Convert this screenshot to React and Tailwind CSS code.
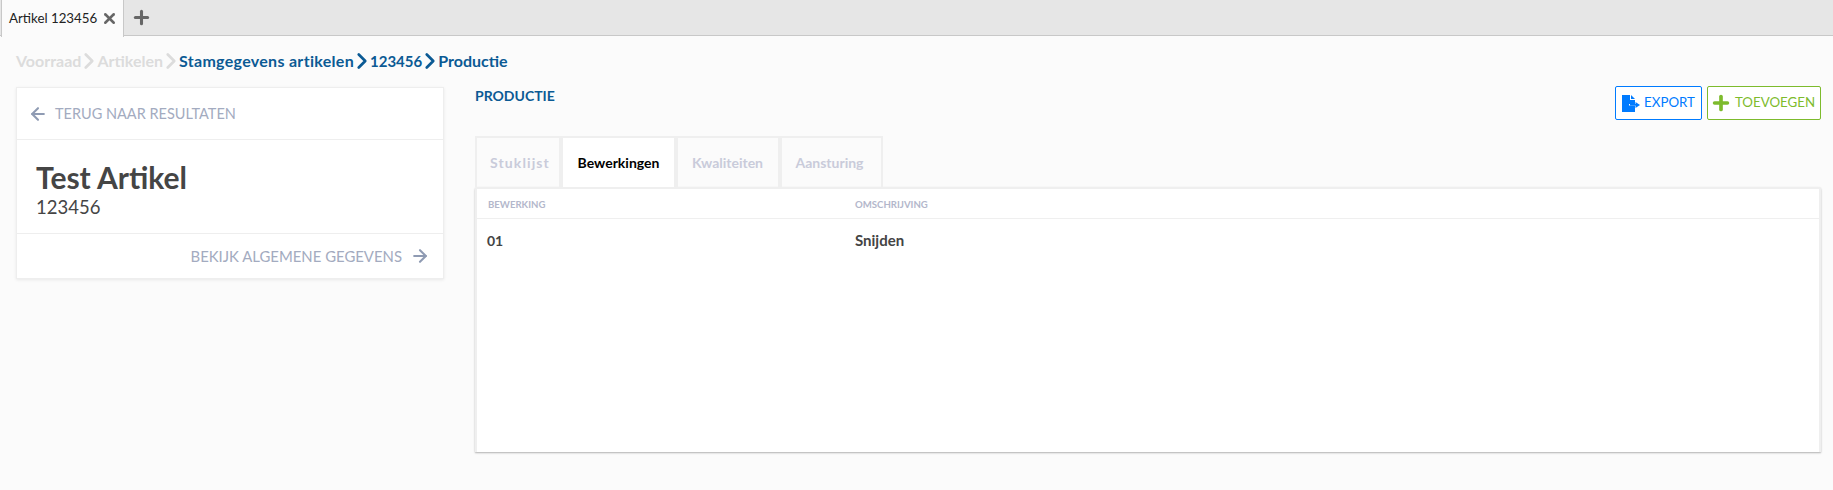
import React from "react";
import { ArrowLeft, ArrowRight, ChevronRight, Plus, X } from "lucide-react";

const font = "font-['Lato','Liberation_Sans',sans-serif]";

function Crumb({ label, muted, last, className = "" }) {
  return (
    <>
      <span className={(muted ? "text-[#dcdcdc] " : "text-[#0b5a94] ") + className}>{label}</span>
      {!last && (
        <ChevronRight
          size={26}
          strokeWidth={2.5}
          className={muted ? "text-[#dcdcdc] -mx-[5px]" : "text-[#0b5a94] -mx-[5px]"}
        />
      )}
    </>
  );
}

function ExportIcon() {
  return (
    <svg width="18" height="17" viewBox="0 0 18 17" className="shrink-0">
      <path d="M0 0h8v5h5v4H7v1.500h6V17H0z" fill="#007bff" />
      <path d="M9 0l4 4H9z" fill="#007bff" />
      <path d="M13.500 7l4.500 3-4.500 3z" fill="#007bff" />
      <path d="M8 9h6v1.500H8z" fill="#007bff" />
    </svg>
  );
}

function Tab({ label, active, width, className = "" }) {
  return (
    <div
      className={
        "h-[51px] flex items-center justify-center border-2 border-b-0 border-[#efefef] text-[14px] font-bold " +
        width +
        (active ? " bg-white text-black " : " text-[#c9cbda] ") +
        className
      }
    >
      {label}
    </div>
  );
}

export default function App() {
  return (
    <div className={"w-[1833px] h-[490px] bg-[#fbfbfb] overflow-hidden " + font}>
      {/* Tab bar */}
      <div className="h-[36px] bg-[#e6e6e6] border-b border-[#c8c8c8] flex items-start">
        <div className="h-[37px] w-[123px] bg-[#fbfbfb] border-x border-[#c8c8c8] ml-[1px] flex items-center pl-[7px] gap-[4px] text-[13.300px] text-[#222]">
          <span>Artikel 123456</span>
          <X size={17} strokeWidth={3.5} className="text-[#666]" />
        </div>
        <div className="h-[35px] flex items-center ml-[7px]">
          <Plus size={21} strokeWidth={3.5} className="text-[#666]" />
        </div>
      </div>

      {/* Breadcrumb */}
      <div className="flex items-center h-[18px] mt-[16px] ml-[16px] text-[16px] font-bold">
        <Crumb label="Voorraad" muted />
        <Crumb label="Artikelen" muted />
        <Crumb label="Stamgegevens artikelen" className="tracking-[0.3px]" />
        <Crumb label="123456" className="text-[15px]" />
        <Crumb label="Productie" last />
      </div>

      <div className="flex mt-[17px] ml-[16px]">
        {/* Left card */}
        <div className="w-[428px] h-[192px] bg-white border border-[#eeeeee] shadow-[0_1px_3px_rgba(0,0,0,0.08)] flex flex-col">
          <div className="h-[52px] flex items-center pl-[11px] gap-[7px] border-b border-[#eeeeee] text-[14.500px] text-[#a3abc0]">
            <ArrowLeft size={20} strokeWidth={2.5} className="text-[#8f9bb3]" />
            <span>TERUG NAAR RESULTATEN</span>
          </div>
          <div className="h-[94px] px-[19px] border-b border-[#eeeeee] flex flex-col">
            <div className="text-[30px] leading-[34px] mt-[20px] font-bold text-[#454545]">Test Artikel</div>
            <div className="text-[18.500px] leading-[22px] mt-[2px] text-[#454545]">123456</div>
          </div>
          <div className="flex-1 flex items-center justify-end pr-[13px] gap-[8px] text-[14.900px] text-[#a3abc0]">
            <span>BEKIJK ALGEMENE GEGEVENS</span>
            <ArrowRight size={20} strokeWidth={2.5} className="text-[#8f9bb3]" />
          </div>
        </div>

        {/* Right part */}
        <div className="w-[1346px] ml-[31px]">
          <div className="flex justify-between items-start h-[49px]">
            <div className="text-[14px] font-bold text-[#0b5a94] leading-[18px]">PRODUCTIE</div>
            <div className="flex gap-[5px] -mt-[1px]">
              <div className="h-[34px] w-[87px] rounded-[2px] border border-[#007bff] bg-white flex items-center justify-center gap-[4px] text-[13.300px] text-[#007bff]">
                <ExportIcon />
                <span>EXPORT</span>
              </div>
              <div className="h-[34px] w-[114px] rounded-[2px] border border-[#7dbb2d] bg-white flex items-center justify-center gap-[3px] pr-[3px] text-[13.300px] text-[#7dbb2d]">
                <Plus size={22} strokeWidth={4} />
                <span>TOEVOEGEN</span>
              </div>
            </div>
          </div>

          <div className="flex">
            <Tab label="Stuklijst" width="w-[86px]" className="tracking-[1.100px] pl-[4px]" />
            <Tab label="Bewerkingen" active width="w-[115px]" />
            <Tab label="Kwaliteiten" width="w-[104px]" className="pr-[1px]" />
            <Tab label="Aansturing" width="w-[103px]" className="pr-[4px]" />
          </div>

          <div className="h-[265px] bg-white border-2 border-[#efefef] border-b-0 shadow-[0_1px_2px_rgba(0,0,0,0.3)] rounded-t-[2px]">
            <div className="h-[30px] pt-[4px] flex items-center border-b border-[#efefef] text-[9.600px] font-bold text-[#b3b7cb]">
              <div className="w-[378px] pl-[11px]">BEWERKING</div>
              <div>OMSCHRIJVING</div>
            </div>
            <div className="h-[42px] flex items-center text-[15px] font-bold text-[#444]">
              <div className="w-[378px] pl-[10px] text-[14px]">01</div>
              <div>Snijden</div>
            </div>
          </div>
        </div>
      </div>
    </div>
  );
}
